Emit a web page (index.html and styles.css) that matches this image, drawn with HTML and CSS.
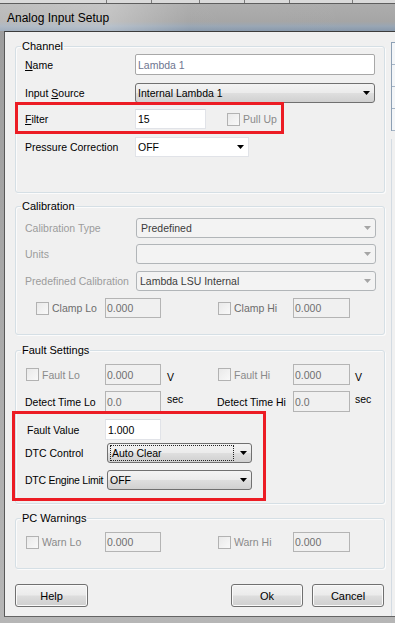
FILE: index.html
```html
<!DOCTYPE html>
<html>
<head>
<meta charset="utf-8">
<title>Analog Input Setup</title>
<link rel="stylesheet" href="styles.css">
</head>
<body>
<div class="window">
  <div class="topstrip">
    <span class="seg" style="width:107px"></span>
    <span class="seg" style="width:45px"></span>
    <span class="seg" style="width:48px"></span>
    <span class="seg" style="width:45px"></span>
    <span class="seg" style="width:45px"></span>
    <span class="seg" style="width:63px"></span>
  </div>
  <div class="titlebar">Analog Input Setup</div>
  <div class="client">
    <div class="main">
      <fieldset class="group g-channel">
        <legend>Channel</legend>
        <div class="body">
          <div class="row mt1 h21">
            <span class="lbl w110"><span><u>N</u>ame</span></span>
            <div class="txt name w240">Lambda 1</div>
          </div>
          <div class="row mt8 h20">
            <span class="lbl w110"><span>Input <u>S</u>ource</span></span>
            <div class="combo w240"><span>Internal Lambda 1</span><svg class="arr" width="7" height="4" viewBox="0 0 7 4"><path d="M0 0h7L3.5 4z"/></svg></div>
          </div>
          <div class="row mt6 h20">
            <span class="lbl w110"><span><u>F</u>ilter</span></span>
            <div class="txt light w71">15</div>
            <span class="cb pullup"></span><span class="cblbl">Pull Up</span>
          </div>
          <div class="row mt8 h20">
            <span class="lbl w110"><span>Pressure Correction</span></span>
            <div class="combo white w114"><span>OFF</span><svg class="arr" width="7" height="4" viewBox="0 0 7 4"><path d="M0 0h7L3.5 4z"/></svg></div>
          </div>
        </div>
      </fieldset>

      <fieldset class="group g-cal">
        <legend>Calibration</legend>
        <div class="body">
          <div class="row mt5 h20">
            <span class="lbl dis w111"><span>Calibration Type</span></span>
            <div class="combo dis w240 pad4"><span>Predefined</span><svg class="arr" width="7" height="4" viewBox="0 0 7 4"><path d="M0 0h7L3.5 4z"/></svg></div>
          </div>
          <div class="row mt6 h20">
            <span class="lbl dis w111"><span>Units</span></span>
            <div class="combo dis w240"><span></span><svg class="arr" width="7" height="4" viewBox="0 0 7 4"><path d="M0 0h7L3.5 4z"/></svg></div>
          </div>
          <div class="row mt7 h20">
            <span class="lbl dis w111"><span>Predefined Calibration</span></span>
            <div class="combo dis w240 pad3"><span>Lambda LSU Internal</span><svg class="arr" width="7" height="4" viewBox="0 0 7 4"><path d="M0 0h7L3.5 4z"/></svg></div>
          </div>
          <div class="row mt7 h20">
            <span class="cbcell c-wide"><span class="cb"></span><span class="cblbl dark">Clamp Lo</span></span>
            <div class="txt dis w56">0.000</div>
            <span class="unit"></span>
            <span class="cbcell c-narrow"><span class="cb"></span><span class="cblbl dark">Clamp Hi</span></span>
            <div class="txt dis w57">0.000</div>
          </div>
        </div>
      </fieldset>

      <fieldset class="group g-fault">
        <legend>Fault Settings</legend>
        <div class="body">
          <div class="row mt7 h21">
            <span class="cbcell c-wide tight"><span class="cb"></span><span class="cblbl">Fault Lo</span></span>
            <div class="txt dis w56">0.000</div>
            <span class="unit low">V</span>
            <span class="cbcell c-narrow"><span class="cb"></span><span class="cblbl">Fault Hi</span></span>
            <div class="txt dis w57">0.000</div>
            <span class="unit low u2">V</span>
          </div>
          <div class="row mt6 h21">
            <span class="lbl w80"><span>Detect Time Lo</span></span>
            <div class="txt dis w56">0.0</div>
            <span class="unit high">sec</span>
            <span class="lbl w76"><span>Detect Time Hi</span></span>
            <div class="txt dis w57">0.0</div>
            <span class="unit high u2">sec</span>
          </div>
          <div class="row mt7 h21">
            <span class="lbl w80 indent2"><span>Fault Value</span></span>
            <div class="txt light w56">1.000</div>
          </div>
          <div class="row mt3 h20">
            <span class="lbl w82"><span>DTC Control</span></span>
            <div class="combo w145"><span class="focus">Auto Clear</span><svg class="arr" width="7" height="4" viewBox="0 0 7 4"><path d="M0 0h7L3.5 4z"/></svg></div>
          </div>
          <div class="row mt7 h20">
            <span class="lbl w82 squeeze"><span>DTC Engine Limit</span></span>
            <div class="combo w145"><span>OFF</span><svg class="arr" width="7" height="4" viewBox="0 0 7 4"><path d="M0 0h7L3.5 4z"/></svg></div>
          </div>
        </div>
      </fieldset>

      <fieldset class="group g-pc">
        <legend>PC Warnings</legend>
        <div class="body">
          <div class="row mt7 h20">
            <span class="cbcell c-wide tight"><span class="cb"></span><span class="cblbl">Warn Lo</span></span>
            <div class="txt dis w56">0.000</div>
            <span class="unit"></span>
            <span class="cbcell c-narrow"><span class="cb"></span><span class="cblbl">Warn Hi</span></span>
            <div class="txt dis w57">0.000</div>
          </div>
        </div>
      </fieldset>

      <div class="buttons">
        <button class="btn w73">Help</button>
        <span class="spacer"></span>
        <button class="btn w72">Ok</button>
        <button class="btn w72">Cancel</button>
      </div>
    </div>
    <div class="side">
      <div class="side-table">
        <div class="cell"></div>
        <div class="cell"></div>
        <div class="cell"></div>
        <div class="cell"></div>
      </div>
      <div class="side-rest"></div>
    </div>
  </div>
  <div class="mark mark-filter"></div>
  <div class="mark mark-dtc"></div>
</div>
</body>
</html>
```

FILE: styles.css
```css
* { box-sizing: border-box; }

html, body {
  margin: 0;
  padding: 0;
}

body {
  font-family: "Liberation Sans", Arial, sans-serif;
  font-size: 10.5px;
  color: #000;
  background: #b4b4b4;
}

.window {
  position: relative;
  width: 395px;
  height: 623px;
  overflow: hidden;
  background: linear-gradient(to bottom, #9c9c9c, #b6b6b6);
}

/* background windows strip */
.topstrip {
  height: 4px;
  display: flex;
  background: #dadada;
  border-bottom: 1px solid #5e5e5e;
}
.seg {
  display: block;
  height: 3px;
  border-right: 1px solid #7a7a7a;
}

.titlebar {
  height: 27px;
  padding-left: 7px;
  display: flex;
  align-items: center;
  font-size: 12px;
  color: #000;
  background:
    linear-gradient(to right, rgba(255,255,255,0.22) 0%, rgba(255,255,255,0.3) 28%, rgba(255,255,255,0.02) 48%, rgba(255,255,255,0) 100%),
    linear-gradient(to bottom, #adadad 0%, #a5a5a5 65%, #99a6b4 82%, #8798ab 100%);
}

.client {
  display: flex;
  margin-left: 4px;
  height: 586px;
  border-top: 1px solid #3c3c3c;
  border-left: 1px solid #585858;
  border-bottom: 1px solid #646464;
  background: #f0f0f0;
}

.main {
  width: 386px;
  flex-shrink: 0;
  padding: 8px 0 0 10px;
}

.side {
  flex: 1;
  display: flex;
  flex-direction: column;
  padding-top: 10px;
}
.side-table {
  height: 89px;
  border-left: 1px solid #8da0b5;
  border-top: 1px solid #8da0b5;
  background: #f4f6f8;
}
.side-table .cell {
  height: 22px;
  border-bottom: 1px solid #a6b5c6;
}
.side-rest {
  flex: 1;
  margin-top: 8px;
  border-left: 1px solid #d3dbe3;
}

/* group boxes */
.group {
  width: 370px;
  margin: 0;
  padding: 0;
  border: 1px solid #d5dfe5;
  border-radius: 3px;
  box-shadow: inset 1px 1px 0 #fbfbfb, 1px 1px 0 #fbfbfb;
  min-inline-size: 0;
}
.group legend {
  margin-left: 5px;
  padding: 0 1px;
  font-size: 11px;
  line-height: 13px;
  color: #000;
}
.group .body {
  padding-left: 9px;
}
.g-channel .body { padding-bottom: 35px; }
.g-cal { margin-top: 7px; }
.g-cal .body { padding-bottom: 16px; }
.g-fault { margin-top: 9px; }
.g-fault .body { padding-bottom: 13px; }
.g-pc { margin-top: 8px; }
.g-pc .body { padding-bottom: 16px; }

/* rows */
.row {
  display: flex;
  align-items: center;
}
.h20 { height: 20px; }
.h21 { height: 21px; }
.row > * { height: 100%; }
.mt1 { margin-top: 1px; }
.mt3 { margin-top: 3px; }
.mt5 { margin-top: 5px; }
.mt6 { margin-top: 6px; }
.mt7 { margin-top: 7px; }
.mt8 { margin-top: 8px; }

.lbl {
  flex-shrink: 0;
  display: flex;
  align-items: center;
  white-space: nowrap;
}
.lbl.dis { color: #9c9c9c; }
.indent2 { padding-left: 2px; }
.squeeze { letter-spacing: -0.25px; }

.w56 { width: 56px; }
.w57 { width: 57px; }
.w71 { width: 71px; }
.w72 { width: 72px; }
.w73 { width: 73px; }
.w76 { width: 76px; }
.w80 { width: 80px; }
.w82 { width: 82px; }
.w110 { width: 110px; }
.w111 { width: 111px; }
.w114 { width: 114px; }
.w145 { width: 145px; }
.w240 { width: 240px; }

/* text boxes */
.txt {
  flex-shrink: 0;
  display: flex;
  align-items: center;
  padding: 0 2px;
  background: #fff;
  border: 1px solid #abadb3;
  white-space: nowrap;
}
.txt.name {
  border-color: #a8a8a8;
  border-radius: 2px;
  color: #6e7590;
}
.txt.light {
  border-color: #e1e3e8;
  border-top-color: #d8dadf;
}
.txt.dis {
  padding-left: 1px;
  background: #f0f0f0;
  border-color: #b4b4b4;
  color: #6f6f6f;
}

/* combo boxes */
.combo {
  flex-shrink: 0;
  display: flex;
  align-items: center;
  justify-content: space-between;
  padding: 0 4px 0 2px;
  border: 1px solid #707070;
  border-radius: 3px;
  background: linear-gradient(to bottom, #f3f3f3 0%, #ebebeb 48%, #dedede 52%, #d0d0d0 100%);
  white-space: nowrap;
}
.combo .arr { fill: #000; flex-shrink: 0; }
.combo.white {
  border-radius: 0;
  border-color: #e1e3e8;
  background: #fff;
  padding-left: 2px;
}
.combo.dis {
  border-color: #b1b5b8;
  background: #f3f3f3;
  color: #3c3c3c;
}
.combo.dis .arr { fill: #a5a5a5; }
.combo.pad4 { padding-left: 4px; }
.combo.pad3 { padding-left: 3px; }
.combo .focus {
  display: flex;
  align-items: center;
  width: 124px;
  height: 16px;
  padding-left: 1px;
  border: 1px dotted #222;
}

/* checkboxes */
.cb {
  flex-shrink: 0;
  display: block;
  width: 13px;
  height: 13px;
  border: 1px solid #b2b2b2;
  background: linear-gradient(135deg, #e9e9e9, #f9f9f9);
}
.cb.pullup { margin-left: 21px; }
.cblbl {
  padding-left: 3px;
  color: #8a8a8a;
  white-space: nowrap;
  display: flex;
  align-items: center;
}
.cblbl.dark { color: #6d6d6d; }

.cbcell {
  flex-shrink: 0;
  display: flex;
  align-items: center;
}
.cbcell.c-wide { width: 80px; padding-left: 11px; }
.cbcell.c-wide.tight { padding-left: 1px; }
.cbcell.c-narrow { width: 76px; padding-left: 1px; }

.unit {
  flex-shrink: 0;
  width: 56px;
  padding-left: 6px;
  display: flex;
  align-items: center;
}
.unit.u2 { width: auto; padding-left: 5px; }
.unit.low { padding-top: 5px; }
.unit.high { padding-bottom: 5px; }

/* buttons */
.buttons {
  display: flex;
  width: 369px;
  height: 23px;
  margin-top: 15px;
}
.spacer { flex: 1; }
.btn {
  height: 23px;
  margin: 0;
  padding: 0;
  font-family: "Liberation Sans", Arial, sans-serif;
  font-size: 11px;
  color: #000;
  border: 1px solid #707070;
  border-radius: 3px;
  background: linear-gradient(to bottom, #f3f3f3 0%, #ebebeb 48%, #dddddd 52%, #cfcfcf 100%);
  box-shadow: inset 0 0 0 1px #fafafa;
}
.btn + .btn { margin-left: 9px; }

/* red annotation rectangles drawn over the dialog */
.mark {
  position: absolute;
  border: 3px solid #ec1c24;
}
.mark-filter {
  left: 15px;
  top: 102px;
  width: 269px;
  height: 32px;
}
.mark-dtc {
  left: 12px;
  top: 411px;
  width: 254px;
  height: 90px;
}
```
